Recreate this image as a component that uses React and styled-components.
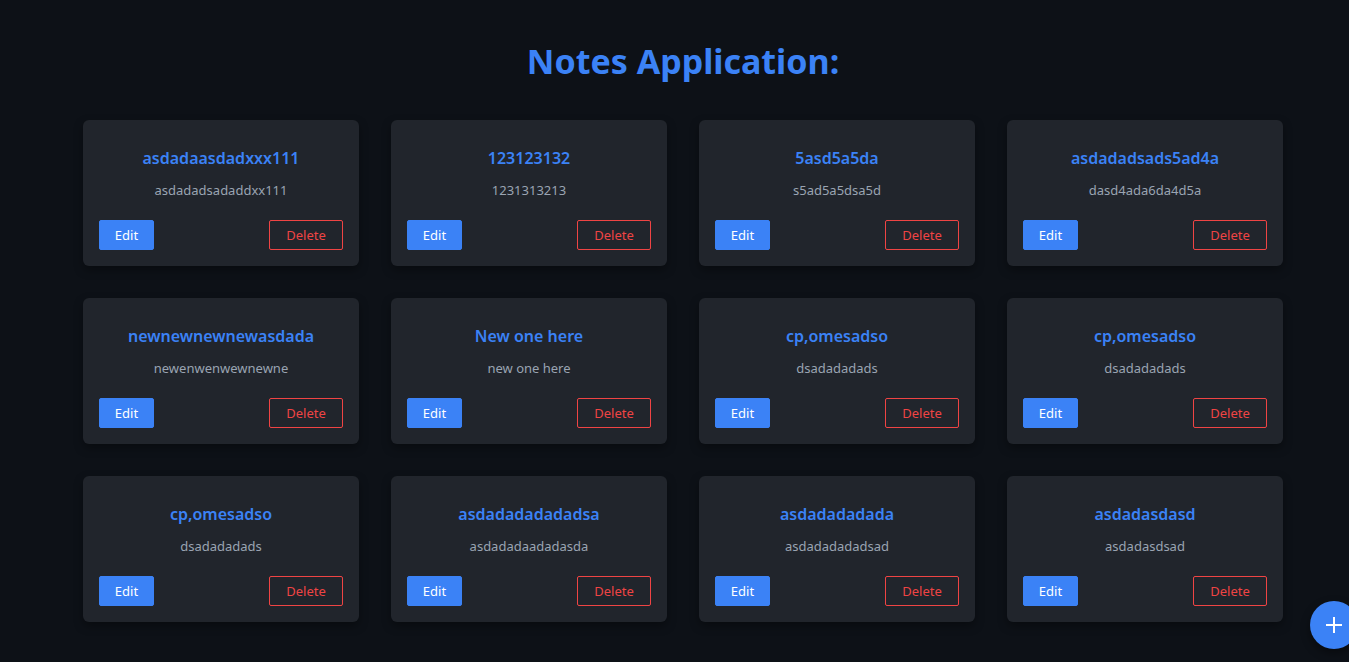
import React from 'react';
import styled, { createGlobalStyle } from 'styled-components';

const GlobalStyle = createGlobalStyle`
  html, body {
    margin: 0;
    padding: 0;
    background: #0d1117;
    overflow: hidden;
  }
  body {
    font-family: "Noto Sans", "Open Sans", sans-serif;
  }
`;

const Page = styled.main`
  width: 1366px;
  min-height: 662px;
  padding-top: 37px;
  box-sizing: border-box;
  display: flex;
  flex-direction: column;
  align-items: center;
`;

const Heading = styled.h1`
  margin: 0 0 35px;
  font-size: 34px;
  line-height: 48px;
  font-weight: 700;
  color: #3b82f6;
`;

const Grid = styled.section`
  display: grid;
  grid-template-columns: repeat(4, 276px);
  gap: 32px;
`;

const Card = styled.article`
  background: #21252c;
  border-radius: 6px;
  box-shadow: 0 4px 10px rgba(0, 0, 0, 0.35);
  padding: 25px 16px 16px;
  display: flex;
  flex-direction: column;
  align-items: center;
  height: 146px;
  box-sizing: border-box;
`;

const Title = styled.h2`
  margin: 0;
  font-size: 16px;
  line-height: 26px;
  font-weight: 600;
  color: #3b82f6;
`;

const Body = styled.p`
  margin: 9px 0 0;
  font-size: 13px;
  line-height: 20px;
  color: #9aa4b2;
`;

const Actions = styled.div`
  margin-top: auto;
  align-self: stretch;
  display: flex;
  justify-content: space-between;
`;

const Button = styled.button`
  height: 30px;
  padding: 0;
  width: ${p => (p.$danger ? '74px' : '55px')};
  border-radius: 2px;
  font-family: inherit;
  font-size: 13px;
  cursor: pointer;
  background: ${p => (p.$danger ? 'transparent' : '#3b82f6')};
  color: ${p => (p.$danger ? '#ef4444' : '#ffffff')};
  border: 1px solid ${p => (p.$danger ? '#ef4444' : '#3b82f6')};
`;

const Fab = styled.button`
  position: fixed;
  left: 1310px;
  top: 601px;
  width: 48px;
  height: 48px;
  border-radius: 50%;
  border: none;
  background: #3b82f6;
  padding: 0;
  display: flex;
  align-items: center;
  justify-content: center;
  box-shadow: 0 4px 10px rgba(0, 0, 0, 0.4);
`;

const notes = [
  ['asdadaasdadxxx111', 'asdadadsadaddxx111'],
  ['123123132', '1231313213'],
  ['5asd5a5da', 's5ad5a5dsa5d'],
  ['asdadadsads5ad4a', 'dasd4ada6da4d5a'],
  ['newnewnewnewasdada', 'newenwenwewnewne'],
  ['New one here', 'new one here'],
  ['cp,omesadso', 'dsadadadads'],
  ['cp,omesadso', 'dsadadadads'],
  ['cp,omesadso', 'dsadadadads'],
  ['asdadadadadadsa', 'asdadadaadadasda'],
  ['asdadadadada', 'asdadadadadsad'],
  ['asdadasdasd', 'asdadasdsad'],
];

export default function App() {
  return (
    <>
      <GlobalStyle />
      <Page>
        <Heading>Notes Application:</Heading>
        <Grid>
          {notes.map(([title, text], i) => (
            <Card key={i}>
              <Title>{title}</Title>
              <Body>{text}</Body>
              <Actions>
                <Button>Edit</Button>
                <Button $danger>Delete</Button>
              </Actions>
            </Card>
          ))}
        </Grid>
      </Page>
      <Fab aria-label="Add note">
        <svg width="18" height="18" viewBox="0 0 18 18">
          <path d="M9 1v16M1 9h16" stroke="#fff" strokeWidth="2" />
        </svg>
      </Fab>
    </>
  );
}
